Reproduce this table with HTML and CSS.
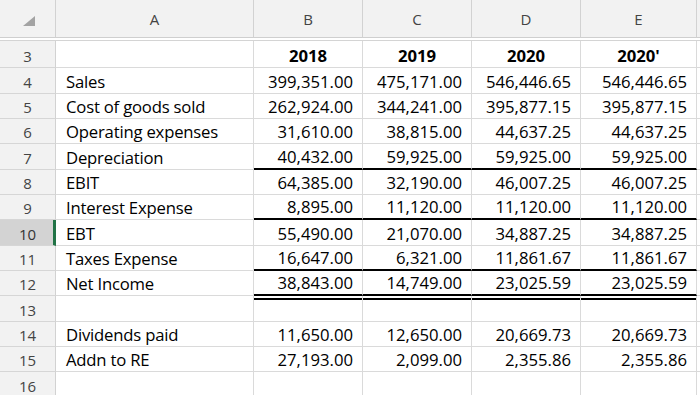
FILE: index.html
```html
<!DOCTYPE html>
<html>
<head>
<meta charset="utf-8">
<link rel="stylesheet" href="styles.css">
</head>
<body>
<div class="sheet">
  <div class="corner"><svg class="tri" width="12" height="10" viewBox="0 0 12 10"><polygon points="0,10 12,10 12,0" fill="#a3a3a3"/></svg></div>
  <div class="ch">A</div>
  <div class="ch">B</div>
  <div class="ch">C</div>
  <div class="ch">D</div>
  <div class="ch">E</div>
  <div class="ch ch-rest"></div>

  <div class="freeze"></div>

  <div class="row"><div class="rh">3</div><div class="lbl"></div><div class="yr">2018</div><div class="yr">2019</div><div class="yr">2020</div><div class="yr">2020'</div><div class="f"></div></div>
  <div class="row"><div class="rh">4</div><div class="lbl">Sales</div><div class="num">399,351.00</div><div class="num">475,171.00</div><div class="num">546,446.65</div><div class="num">546,446.65</div><div class="f"></div></div>
  <div class="row"><div class="rh">5</div><div class="lbl">Cost of goods sold</div><div class="num">262,924.00</div><div class="num">344,241.00</div><div class="num">395,877.15</div><div class="num">395,877.15</div><div class="f"></div></div>
  <div class="row"><div class="rh">6</div><div class="lbl">Operating expenses</div><div class="num">31,610.00</div><div class="num">38,815.00</div><div class="num">44,637.25</div><div class="num">44,637.25</div><div class="f"></div></div>
  <div class="row"><div class="rh">7</div><div class="lbl">Depreciation</div><div class="num ul">40,432.00</div><div class="num ul">59,925.00</div><div class="num ul">59,925.00</div><div class="num ul">59,925.00</div><div class="f"></div></div>
  <div class="row"><div class="rh">8</div><div class="lbl">EBIT</div><div class="num">64,385.00</div><div class="num">32,190.00</div><div class="num">46,007.25</div><div class="num">46,007.25</div><div class="f"></div></div>
  <div class="row"><div class="rh">9</div><div class="lbl">Interest Expense</div><div class="num ul">8,895.00</div><div class="num ul">11,120.00</div><div class="num ul">11,120.00</div><div class="num ul">11,120.00</div><div class="f"></div></div>
  <div class="row"><div class="rh rh-sel">10</div><div class="lbl">EBT</div><div class="num">55,490.00</div><div class="num">21,070.00</div><div class="num">34,887.25</div><div class="num">34,887.25</div><div class="f"></div></div>
  <div class="row"><div class="rh">11</div><div class="lbl">Taxes Expense</div><div class="num ul">16,647.00</div><div class="num ul">6,321.00</div><div class="num ul">11,861.67</div><div class="num ul">11,861.67</div><div class="f"></div></div>
  <div class="row"><div class="rh">12</div><div class="lbl">Net Income</div><div class="num ul">38,843.00</div><div class="num ul">14,749.00</div><div class="num ul">23,025.59</div><div class="num ul">23,025.59</div><div class="f"></div></div>
  <div class="row"><div class="rh">13</div><div class="lbl"></div><div class="num dbl"></div><div class="num dbl"></div><div class="num dbl"></div><div class="num dbl"></div><div class="f"></div></div>
  <div class="row"><div class="rh">14</div><div class="lbl">Dividends paid</div><div class="num">11,650.00</div><div class="num">12,650.00</div><div class="num">20,669.73</div><div class="num">20,669.73</div><div class="f"></div></div>
  <div class="row"><div class="rh">15</div><div class="lbl">Addn to RE</div><div class="num">27,193.00</div><div class="num">2,099.00</div><div class="num">2,355.86</div><div class="num">2,355.86</div><div class="f"></div></div>
  <div class="row"><div class="rh">16</div><div class="lbl"></div><div class="num"></div><div class="num"></div><div class="num"></div><div class="num"></div><div class="f"></div></div>
</div>
</body>
</html>
```
FILE: styles.css
```css
html, body {
  margin: 0;
  padding: 0;
  background: #ffffff;
}

.sheet {
  display: grid;
  grid-template-columns: 56px 198px 109px 109px 109px 116px 1fr;
  grid-template-rows: 38px 3px 27px 26px 25px 25px 26px 25px 25px 26px 25px 25px 26px 25px 25px 26px;
  width: 700px;
  height: 395px;
  overflow: hidden;
  font-family: "Open Sans", "Liberation Sans", sans-serif;
  color: #000;
}

.sheet > div,
.row > div {
  box-sizing: border-box;
}

.row {
  display: contents;
}

.corner {
  background: #f2f2f2;
  border-right: 1px solid #d2d2d2;
  border-bottom: 1px solid #cfcfcf;
  padding: 16px 0 0 23px;
}

.tri {
  display: block;
}

.ch {
  background: #f2f2f2;
  border-right: 1px solid #d2d2d2;
  border-bottom: 1px solid #cfcfcf;
  display: flex;
  align-items: center;
  justify-content: center;
  font-size: 15px;
  color: #444;
}

.ch-rest {
  border-right: none;
}

.freeze {
  grid-column: 1 / -1;
  border-bottom: 1px solid #d4d4d4;
  background: #fff;
}

.rh {
  background: #f2f2f2;
  border-right: 1px solid #d2d2d2;
  border-bottom: 1px solid #d6d6d6;
  display: flex;
  align-items: flex-end;
  justify-content: center;
  font-size: 15px;
  line-height: 22px;
  color: #444;
}

.rh-sel {
  background: #d3d3d3;
  color: #333;
  border-right: 3px solid #217346;
  padding-left: 2px;
}

.lbl,
.num,
.yr,
.f {
  border-right: 1px solid #dadada;
  border-bottom: 1px solid #dadada;
  display: flex;
  align-items: flex-end;
  font-size: 16.7px;
  line-height: 22px;
  white-space: nowrap;
}

.lbl {
  padding-left: 10px;
  letter-spacing: -0.2px;
}

.num {
  justify-content: flex-end;
  padding-right: 9px;
}

.yr {
  justify-content: center;
  font-weight: bold;
}

.f {
  border-right: none;
}

.num.ul {
  border-bottom: 2px solid #000;
}

.num.dbl {
  box-shadow: inset 0 2px 0 #fff, inset 0 4px 0 #000;
}
```
